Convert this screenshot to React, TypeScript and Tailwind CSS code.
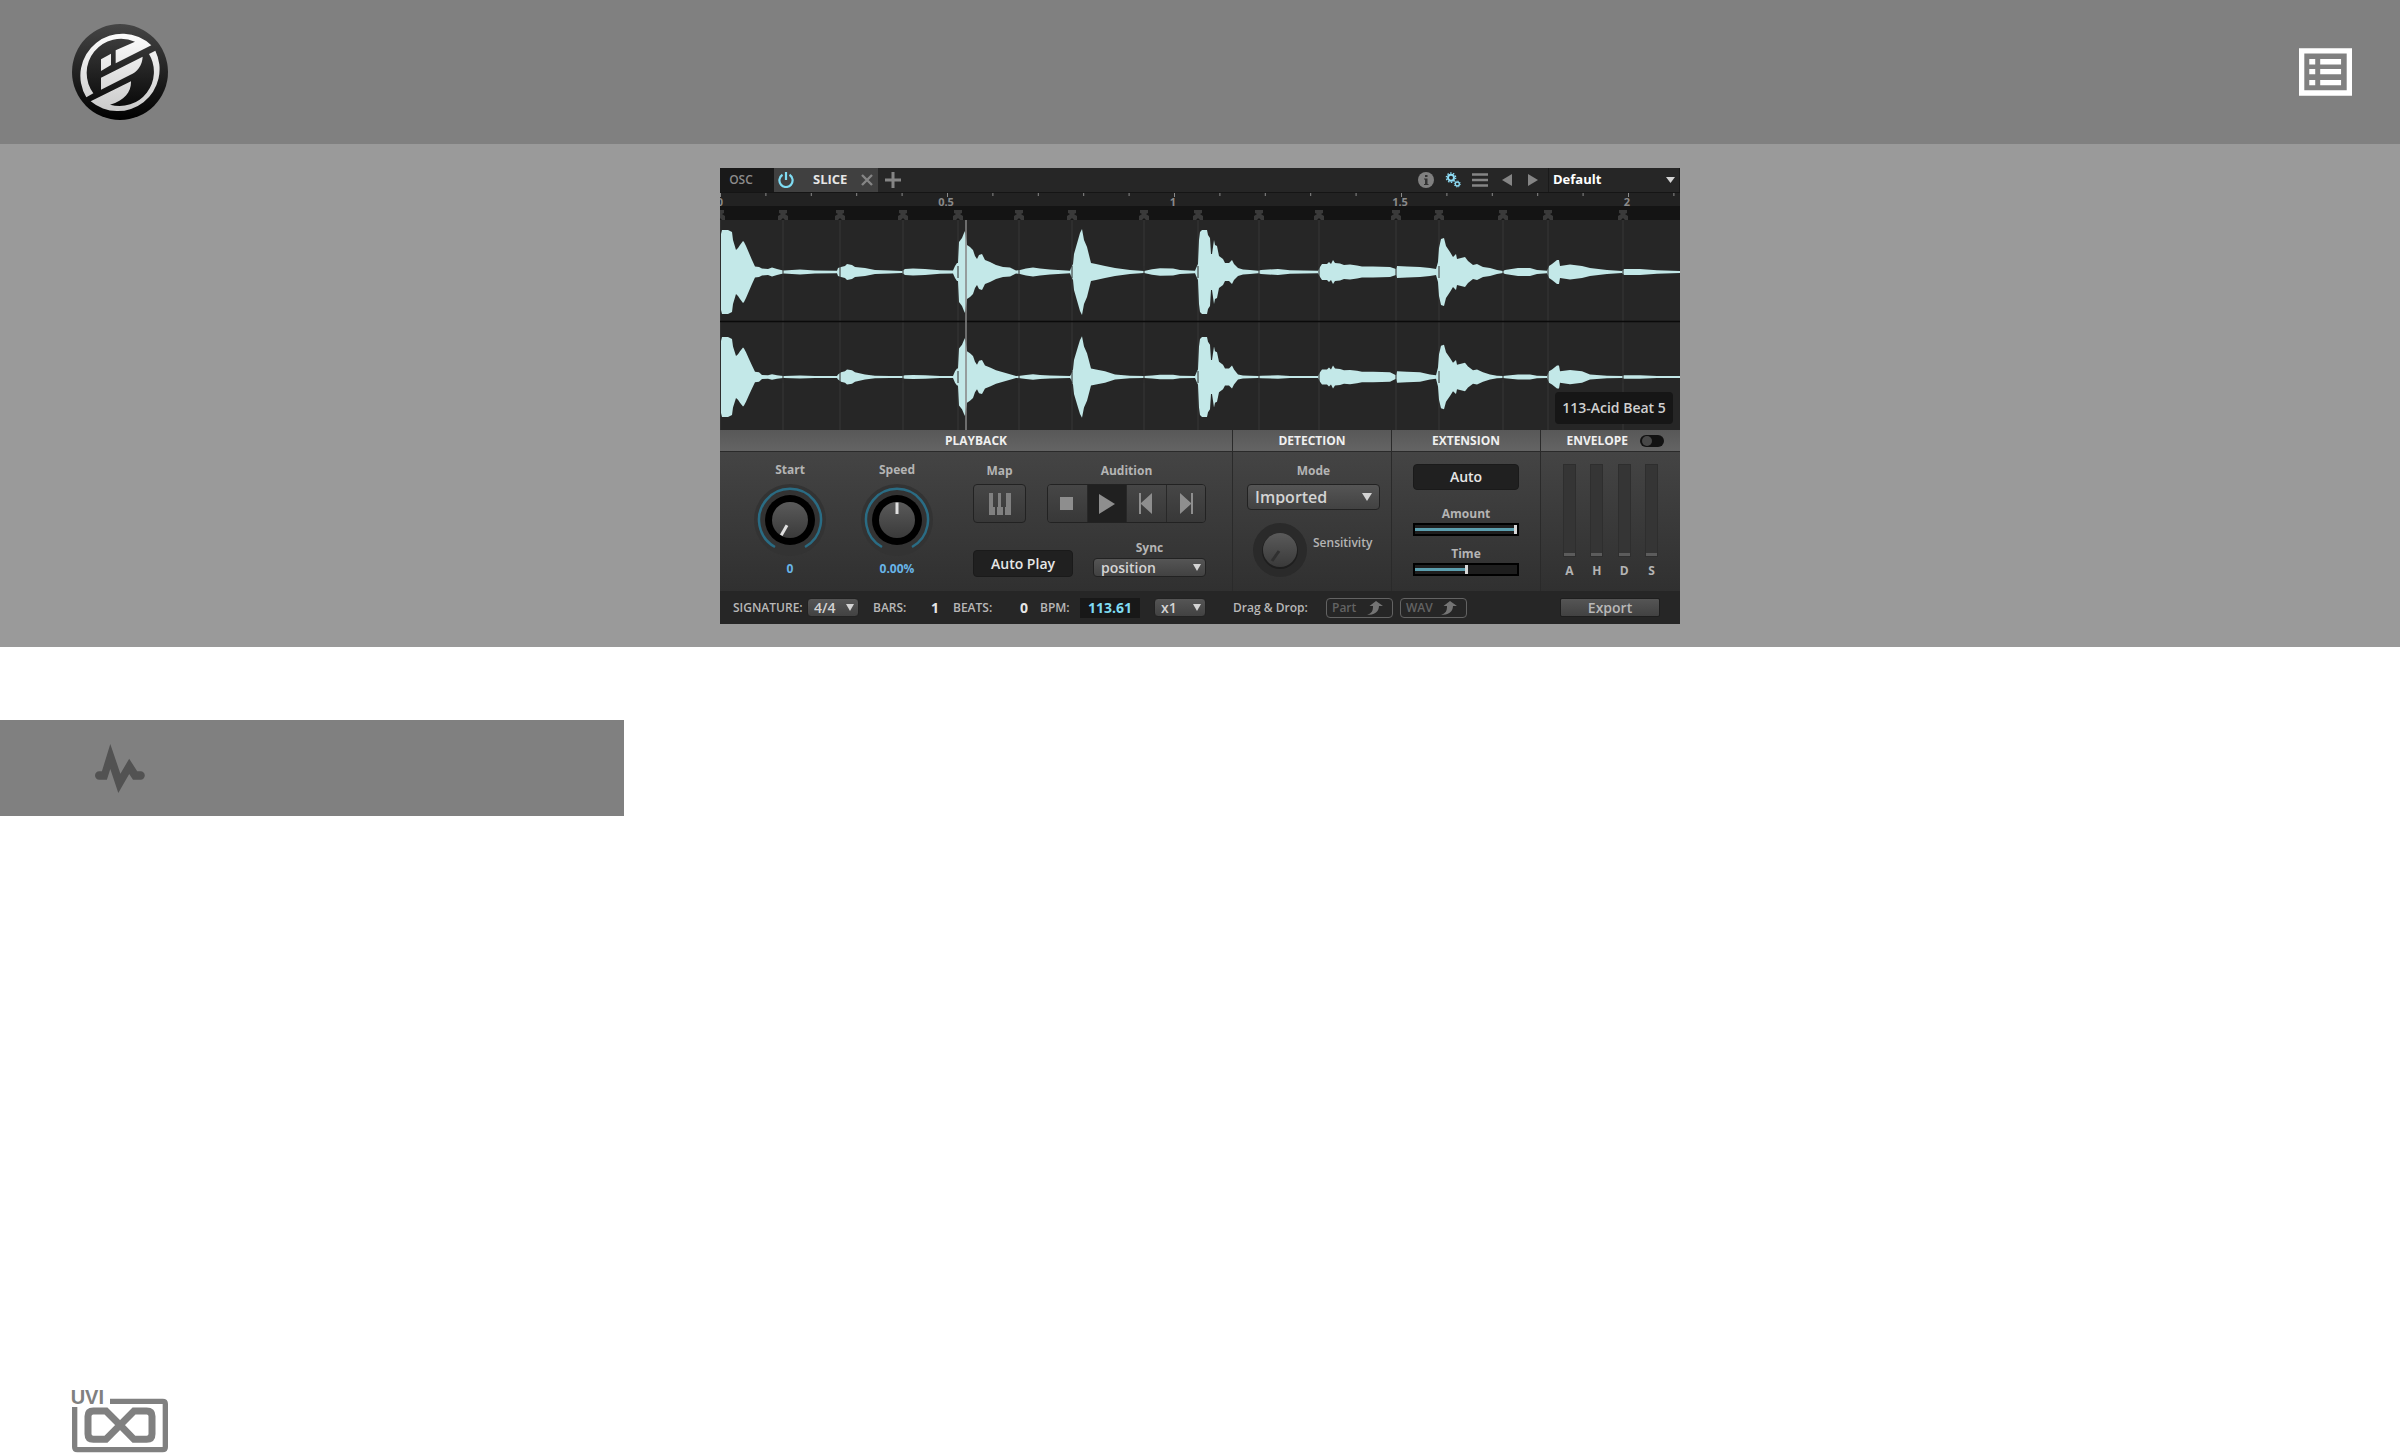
import React from 'react';
import clsx from 'clsx';

const TICK = 45.4;
const SLICES = [0, 63, 120, 183, 238, 299, 352, 424, 478, 539, 599, 676, 719, 783, 828, 903];

// [x, amplitude] pairs along the sample
const ENVELOPE: [number, number][] = [
  [1, 38], [2, 42], [8, 42], [12, 40], [13, 32], [16, 22], [18, 24], [20, 27], [23, 31], [24, 30], [26, 26], [29, 19],
  [32, 12], [35, 5.5], [39, 5], [42, 3.5], [48, 3], [52, 4.4], [57, 3], [61, 2], [64, 1.5], [80, 2.5], [95, 1.5],
  [117, 1.2], [118, 4], [121, 5], [125, 6], [127, 8], [132, 7], [135, 5], [145, 4], [155, 2], [170, 1.5], [182, 1],
  [185, 3], [193, 3.4], [205, 3], [220, 1.8], [233, 1.5], [235, 6], [237, 9], [238, 9], [239, 30], [242, 34],
  [244, 39], [245, 41], [247, 27], [250, 25], [253, 22], [255, 16], [257, 13], [259, 17], [262, 18], [265, 12],
  [270, 10], [276, 7], [283, 5], [290, 4.5], [296, 1.5], [300, 2], [306, 3.5], [313, 4.5], [320, 3.5], [330, 2.5],
  [350, 1.3], [351, 4], [353, 8], [354, 18], [358, 32], [360, 39], [362, 43], [364, 32], [367, 25], [369, 17],
  [371, 9], [376, 8], [385, 6], [395, 4], [410, 2], [424, 1], [432, 2.7], [440, 3.7], [453, 3.6], [460, 2],
  [475, 1.2], [477, 6], [478, 8], [479, 32], [480, 40], [482, 42], [487, 42], [488, 37], [490, 34], [491, 18],
  [492, 18], [494, 32], [495, 27], [497, 26], [499, 16], [503, 13], [505, 9], [509, 9], [512, 12], [514, 8],
  [518, 4], [523, 2.5], [530, 2], [538, 1.2], [541, 2], [558, 3], [570, 1.7], [598, 1.2], [600, 5], [602, 8],
  [607, 8], [609, 10], [611, 8], [613, 12], [615, 9], [620, 8.5], [624, 7], [630, 7.5], [637, 6.5], [642, 5.5],
  [653, 5.5], [670, 5], [676, 3], [677, 6], [687, 5.5], [700, 5], [710, 4], [716, 3], [718, 10], [719, 24],
  [721, 33], [724, 34], [726, 26], [730, 20], [733, 15], [736, 18], [737, 13], [741, 14], [745, 15], [748, 11],
  [753, 7], [757, 8], [763, 5], [770, 4], [777, 2], [783, 1], [785, 2], [798, 4], [810, 4], [817, 2], [827, 1.3],
  [829, 6], [832, 8], [837, 12], [839, 12], [840, 6], [850, 7.5], [862, 6], [870, 4], [887, 2], [902, 1],
  [904, 3], [920, 3], [937, 1.8], [960, 1],
];

const wavePath = (center: number, scale: (a: number) => number) => {
  const top = ENVELOPE.map(([x, a]) => `${x} ${center - scale(a)}`);
  const bottom = [...ENVELOPE].reverse().map(([x, a]) => `${x} ${center + scale(a)}`);
  return `M${top.join('L')}L${bottom.join('L')}Z`;
};

const LEFT_WAVE = wavePath(80, (a) => a);
const RIGHT_WAVE = wavePath(185, (a) => (a < 5 ? Math.max(0.9, a * 0.6) : a * 0.95));

const BrandLogo: React.FC = () => (
  <svg viewBox="66 42 288 288" className="size-24" role="img" aria-label="Home">
    <defs>
      <linearGradient id="disc" x1="0" y1="0" x2="0" y2="1">
        <stop offset="0" stopColor="#454545" />
        <stop offset="1" stopColor="#000" />
      </linearGradient>
      <linearGradient id="mark" gradientUnits="userSpaceOnUse" x1="0" y1="60" x2="0" y2="312">
        <stop offset="0" stopColor="#fff" />
        <stop offset="1" stopColor="#c8c8c8" />
      </linearGradient>
    </defs>
    <circle cx="210" cy="186" r="144" fill="url(#disc)" />
    <g fill="url(#mark)">
      <path d="M109 262A126 126 0 0 1 304 106L197 160V121L255 95A103 103 0 0 0 130 250Z" />
      <path d="M316 122A126 126 0 0 1 122 274L243 214C244 245 225 272 180 284A103 103 0 0 0 297 132Z" />
      <path d="M153 148L183 131V165L153 183Z" />
      <path d="M153 203L278 140C277 165 262 186 240 195L153 239Z" />
    </g>
  </svg>
);

const MenuIcon: React.FC = () => (
  <svg viewBox="86 84 160 144" className="h-12 w-[53px]" fill="#fff">
    <path fillRule="evenodd" d="M86 84H246V228H86ZM102 100V211H230V100Z" />
    {[117, 147, 180].map((y) => (
      <path key={y} d={`M117 ${y}h18v16h-18zM150 ${y}h63v16h-63z`} />
    ))}
  </svg>
);

const PulseIcon: React.FC = () => (
  <svg viewBox="0 0 50 49" className="h-[49px] w-[50px]" fill="#525252">
    <path d="M4.200 27.300H6.900L15.300 0L25.400 29.700L34.200 14.700L42.200 27.300H45.600a4.200 4.200 0 0 1 0 8.400H38L34.200 30L23.300 49L15.300 25L11.900 35.700H4.200a4.200 4.200 0 0 1 0-8.400Z" />
  </svg>
);

const UviLogo: React.FC = () => (
  <svg viewBox="66 60 288 189" className="h-[63px] w-24 overflow-visible" role="img" aria-label="UVI">
    <text x="62" y="103" className="font-['Liberation_Sans',sans-serif] text-[60px] font-bold" fill="#808080">UVI</text>
    <g fill="none" stroke="#808080">
      <path strokeWidth="16" d="M180 94H338Q346 94 346 102V231Q346 239 338 239H82Q74 239 74 231V111" />
      <path
        strokeWidth="21"
        d="M210 165L168 123H130Q114 123 114 139V192Q114 208 130 208H168L252 123H290Q306 123 306 139V192Q306 208 290 208H252Z"
      />
    </g>
  </svg>
);

const GearsIcon: React.FC = () => (
  <svg viewBox="0 0 48 48" className="size-4" fill="none" stroke="#8edcf5">
    <circle cx="18" cy="17" r="9" strokeWidth="6" />
    <circle cx="18" cy="17" r="14" strokeWidth="4" strokeDasharray="4.4 4.4" />
    <circle cx="37" cy="36" r="6" strokeWidth="4" />
    <circle cx="37" cy="36" r="9" strokeWidth="3" strokeDasharray="3.5 3.5" />
  </svg>
);

const Arrow: React.FC<{ className?: string }> = ({ className }) => (
  <svg viewBox="0 0 8 7" preserveAspectRatio="none" className={clsx('pointer-events-none absolute', className)} fill="#d4d4d4">
    <path d="M0 0H8L4 7Z" />
  </svg>
);

const TabBar: React.FC = () => (
  <div className="flex h-6 items-stretch bg-[#262626]">
    <button className="w-[54px] bg-[#191919] pr-3 text-xs font-semibold text-[#8c8c8c]">OSC</button>
    <div className="flex w-[104px] items-center bg-[#404040] pl-1">
      <button aria-label="Power">
        <svg viewBox="0 0 16 16" className="size-4" fill="none" stroke="#7fdcf3" strokeWidth="2.2">
          <path d="M4.500 2.800A6.600 6.600 0 1 0 11.500 2.800M8 0V8" />
        </svg>
      </button>
      <span className="ml-[19px] w-12 text-[13px] font-bold text-[#e6e6e6]">SLICE</span>
      <button aria-label="Close">
        <svg viewBox="0 0 12 12" className="size-3" stroke="#858585" strokeWidth="2.400">
          <path d="M1 1L11 11M11 1L1 11" />
        </svg>
      </button>
    </div>
    <button aria-label="Add" className="ml-[7px]">
      <svg viewBox="0 0 16 16" className="size-4" stroke="#858585" strokeWidth="3">
        <path d="M8 0V16M0 8H16" />
      </svg>
    </button>
    <div className="ml-auto flex items-center">
      <button aria-label="Info" className="mr-[11px]">
        <svg viewBox="0 0 16 16" className="size-4">
          <circle cx="8" cy="8" r="8" fill="#808080" />
          <path d="M7 3h2.500v2H7zM6 6.500h3.500V12H10.500V13H6V12H7V7.500H6z" fill="#333" />
        </svg>
      </button>
      <button aria-label="Settings" className="mr-[11px]"><GearsIcon /></button>
      <button aria-label="Menu" className="mr-[14px]">
        <svg viewBox="0 0 16 14" className="h-3.5 w-4" stroke="#858585" strokeWidth="2.600">
          <path d="M0 1.500H16M0 7H16M0 12.500H16" />
        </svg>
      </button>
      <button aria-label="Previous" className="mr-4">
        <svg viewBox="0 0 10 12" className="h-3 w-2.5" fill="#858585"><path d="M10 0V12L0 6Z" /></svg>
      </button>
      <button aria-label="Next" className="mr-[10px]">
        <svg viewBox="0 0 10 12" className="h-3 w-2.5" fill="#858585"><path d="M0 0V12L10 6Z" /></svg>
      </button>
      <div className="relative flex h-6 w-[132px] items-center border-x border-[#1a1a1a]">
        <select aria-label="Preset" className="size-full appearance-none pl-1 text-[13px] font-bold text-white">
          <option>Default</option>
        </select>
        <Arrow className="right-1 h-[6px] w-[9px]" />
      </div>
    </div>
  </div>
);

const Waveform: React.FC = () => (
  <div className="relative">
    <svg viewBox="0 0 960 238" className="block w-full">
      <rect width="960" height="238" fill="#262626" />
      <rect width="960" height="14" fill="#222" />
      <rect y="14" width="960" height="14" fill="#141414" />
      <path d="M0 0.500H960" stroke="#151515" />
      {Array.from({ length: 22 }, (_, i) => (
        <path key={i} d={`M${i * TICK + 0.5} 1v${i % 5 ? 3 : 4}`} stroke="#8a8a8a" />
      ))}
      {['0', '0.5', '1', '1.5', '2'].map((label, i) => (
        <text key={label} x={i ? i * TICK * 5 - 1 : 0} y="14" textAnchor="middle" fontSize="11" fontWeight="700" fill="#8a8a8a">
          {label}
        </text>
      ))}
      {SLICES.map((x) => (
        <g key={x}>
          <path d={`M${x} 28V238`} stroke="#363636" />
          <path d={`M${x - 4} 18h8v3l-2 1 3 2v4h-3l-2-2-2 2h-3v-4l3-2-2-1z`} fill="#3a3a3a" />
        </g>
      ))}
      <path d="M0 129.500H960" stroke="#0a0a0a" strokeWidth="1.500" />
      <path d={LEFT_WAVE} fill="#c3e8e8" />
      <path d={RIGHT_WAVE} fill="#c3e8e8" />
      {SLICES.slice(1).map((x) => (
        <path key={x} d={`M${x} 74v12M${x} 179v12`} stroke="#2b2b2b" />
      ))}
      <path d="M246 28V238" stroke="#868686" strokeWidth="1.500" />
    </svg>
    <div className="absolute right-[7px] bottom-1.5 flex h-8 w-[118px] items-center justify-center rounded-sm bg-[#161616] text-sm font-semibold text-[#d0d0d0]">
      113-Acid Beat 5
    </div>
  </div>
);

const Section: React.FC<{ title: string; toggle?: boolean; className: string; children: React.ReactNode }> = ({
  title,
  toggle,
  className,
  children,
}) => (
  <section className="flex flex-col border-l border-[#2a2a2a] first:border-l-0">
    <h2
      className={clsx(
        'flex h-[22px] items-center gap-3 border-b border-[#2a2a2a] bg-linear-to-b from-[#585858] to-[#646464] text-xs font-bold text-[#f0f0f0]',
        toggle ? 'justify-end pr-4' : 'justify-center',
      )}
    >
      {title}
      {toggle && (
        <label className="flex">
          <input type="checkbox" role="switch" aria-label="Envelope" className="peer sr-only" />
          <span className="flex h-3 w-6 items-center rounded-full bg-[#121212] px-0.5">
            <span className="size-2.5 rounded-full bg-[#484848]" />
          </span>
        </label>
      )}
    </h2>
    <div className={clsx('flex-1 bg-linear-to-b from-[#444] to-[#303030] text-xs leading-4 font-bold text-[#b4b4b4]', className)}>
      {children}
    </div>
  </section>
);

const Knob: React.FC<{ label: string; value: string; angle: number }> = ({ label, value, angle }) => (
  <label className="flex w-[72px] flex-col items-center">
    {label}
    <input type="range" min="-150" max="150" defaultValue={angle} className="sr-only" />
    <svg viewBox="0 0 72 72" className="mt-1.5 size-[72px]">
      <circle cx="36" cy="36" r="36" fill="#333" />
      <path d="M21 63A31 31 0 1 1 51 63" fill="none" stroke="#2a6c84" strokeWidth="2.500" />
      <circle cx="36" cy="36" r="25" fill="#000" />
      <circle cx="36" cy="36" r="18" fill="url(#cap)" />
      <path d="M36 18.500V30" stroke="#e0e0e0" strokeWidth="3" transform={`rotate(${angle} 36 36)`} />
    </svg>
    <output className="mt-[5px] text-[#68b5e8]">{value}</output>
  </label>
);

const Dropdown: React.FC<{ label: string; value: string; large?: boolean; className: string }> = ({ label, value, large, className }) => (
  <span className="relative flex items-center">
    <select
      aria-label={label}
      className={clsx(
        'w-full appearance-none rounded-sm border border-[#222] bg-linear-to-b from-[#555] to-[#424242] leading-4 font-semibold text-[#d4d4d4]',
        large ? 'h-[26px] text-base' : 'h-[19px]',
        className,
      )}
    >
      <option>{value}</option>
    </select>
    <Arrow className={large ? 'right-2 h-2 w-2.5' : 'right-[5px] h-[7px] w-2'} />
  </span>
);

const BarSlider: React.FC<{ label: string; value: number }> = ({ label, value }) => (
  <label className="flex flex-col items-center gap-px">
    {label}
    <span className="flex h-[13px] w-full border-2 border-black bg-[#1e1e1e]">
      <input
        type="range"
        defaultValue={value}
        className="h-full w-full appearance-none bg-size-[100%_3px] bg-center bg-no-repeat [&::-webkit-slider-thumb]:h-[9px] [&::-webkit-slider-thumb]:w-[3px] [&::-webkit-slider-thumb]:appearance-none [&::-webkit-slider-thumb]:bg-[#d8d8d8]"
        style={{ backgroundImage: `linear-gradient(90deg, #5b9eae ${value}%, transparent ${value}%)` }}
      />
    </span>
  </label>
);

const EnvelopeSlider: React.FC<{ label: string }> = ({ label }) => (
  <label className="flex w-[13px] flex-col items-center gap-1.5">
    <input
      type="range"
      defaultValue={0}
      className="h-[93px] w-[13px] appearance-none border border-[#2e2e2e] bg-[#353535] [direction:rtl] [writing-mode:vertical-lr] [&::-webkit-slider-thumb]:h-[3px] [&::-webkit-slider-thumb]:w-[11px] [&::-webkit-slider-thumb]:appearance-none [&::-webkit-slider-thumb]:bg-[#5c5c5c]"
    />
    {label}
  </label>
);

const TRANSPORT = [
  { name: 'Stop', d: 'M5 6H18V19H5Z' },
  { name: 'Play', d: 'M4 3V23L20 13Z' },
  { name: 'Previous', d: 'M5 2H7V12L18 2V23L7 13V23H5Z' },
  { name: 'Next', d: 'M17 2H19V23H17V13L6 23V2L17 12Z' },
];

const Transport: React.FC = () => (
  <div className="flex h-[39px] w-[159px] overflow-hidden rounded border border-[#222]">
    {TRANSPORT.map(({ name, d }) => (
      <button
        key={name}
        aria-label={name}
        className={clsx(
          'flex flex-1 items-center justify-center border-l border-[#282828] first:border-l-0',
          name === 'Play' ? 'bg-[#202020]' : 'bg-linear-to-b from-[#464646] to-[#383838]',
        )}
      >
        <svg viewBox="0 0 24 25" className="h-[25px] w-6" fill="#8e8e8e"><path d={d} /></svg>
      </button>
    ))}
  </div>
);

const Playback: React.FC = () => (
  <Section title="PLAYBACK" className="flex pr-[26px] pb-3.5 pl-[34px]">
    <div className="flex gap-[35px] pt-2.5">
      <Knob label="Start" value="0" angle={-150} />
      <Knob label="Speed" value="0.00%" angle={0} />
    </div>
    <div className="ml-auto flex w-[233px] flex-col justify-between pt-[11px]">
      <div className="flex justify-between">
        <div className="flex flex-col items-center gap-[5px]">
          Map
          <button aria-label="Map" className="flex h-[39px] w-[53px] items-center justify-center rounded border border-[#222] bg-linear-to-b from-[#464646] to-[#383838]">
            <svg viewBox="0 0 22 22" className="size-[22px]" fill="#808080">
              <path d="M0 0H4V14H6V22H0ZM9 0H12V14H14V22H8V14H9ZM17 0H22V22H16V14H17Z" />
            </svg>
          </button>
        </div>
        <div className="flex flex-col items-center gap-[5px]">
          Audition
          <Transport />
        </div>
      </div>
      <div className="flex items-end justify-between">
        <button className="h-[27px] w-[100px] rounded border border-[#1a1a1a] bg-[#202020] text-sm font-semibold text-[#e6e6e6]">Auto Play</button>
        <div className="flex w-[113px] flex-col gap-0.5 text-center">
          Sync
          <Dropdown label="Sync" value="position" className="pl-[7px] text-sm" />
        </div>
      </div>
    </div>
  </Section>
);

const Detection: React.FC = () => (
  <Section title="DETECTION" className="pt-[11px] pr-[11px] pb-3.5 pl-3.5">
    <div className="flex flex-col gap-[5px] text-center">
      Mode
      <Dropdown large label="Mode" value="Imported" className="pl-[7px]" />
    </div>
    <label className="mt-[13px] ml-1.5 flex gap-1.5">
      <svg viewBox="0 0 54 54" className="size-[54px] shrink-0">
        <circle cx="27" cy="27" r="27" fill="#2a2a2a" />
        <circle cx="27" cy="28" r="18" fill="#1e1e1e" />
        <circle cx="27" cy="27" r="17" fill="url(#cap)" />
        <path d="M26 28L19 38" stroke="#303030" strokeWidth="3" />
      </svg>
      <input type="range" defaultValue={0} disabled className="sr-only" />
      <span className="mt-3 font-semibold">Sensitivity</span>
    </label>
  </Section>
);

const Extension: React.FC = () => (
  <Section title="EXTENSION" className="px-[21px] pt-3 pb-3.5">
    <button className="mb-4 block h-[26px] w-full rounded border border-[#1a1a1a] bg-[#202020] text-sm font-semibold text-[#e6e6e6]">Auto</button>
    <div className="flex flex-col gap-2.5">
      <BarSlider label="Amount" value={100} />
      <BarSlider label="Time" value={50} />
    </div>
  </Section>
);

const Field: React.FC<{ label: string; value: string; className: string; labelClass: string }> = ({
  label,
  value,
  className,
  labelClass,
}) => (
  <label className="flex items-center">
    <span className={labelClass}>{label}</span>
    <input type="text" defaultValue={value} className={clsx('text-sm font-bold', className)} />
  </label>
);

const DragTarget: React.FC<{ children: React.ReactNode }> = ({ children }) => (
  <button className="flex h-5 w-[67px] items-center justify-between rounded border border-[#636363] px-[5px] text-[#636363]">
    {children}
    <svg viewBox="0 0 16 14" className="mr-1 h-3.5 w-4" fill="#747474">
      <path d="M0 14C5 12 6 10 6 5H2.500L9 0L16 5H12C12 11 7 14 0 14Z" />
    </svg>
  </button>
);

const StatusBar: React.FC = () => (
  <div className="flex h-[33px] items-center bg-[#262626] pr-5 pl-[13px] text-xs font-semibold text-[#b8b8b8]">
    <span className="w-[74px]">SIGNATURE:</span>
    <div className="mr-3.5 w-[52px]"><Dropdown label="Signature" value="4/4" className="pl-1.5 text-sm" /></div>
    <Field label="BARS:" value="1" labelClass="w-10" className="mr-3.5 w-[26px] text-right text-[#e6e6e6]" />
    <Field label="BEATS:" value="0" labelClass="w-[46px]" className="mr-3 w-[29px] text-right text-[#e6e6e6]" />
    <Field label="BPM:" value="113.61" labelClass="w-10" className="mr-3.5 h-5 w-[60px] bg-[#181818] text-center text-[#7fdcf3]" />
    <div className="w-[52px]"><Dropdown label="Multiplier" value="x1" className="pl-1.5 text-sm" /></div>
    <span className="ml-[27px] w-[93px]">Drag &amp; Drop:</span>
    <div className="flex gap-[7px]">
      <DragTarget>Part</DragTarget>
      <DragTarget>WAV</DragTarget>
    </div>
    <button className="ml-auto h-[19px] w-[100px] rounded-xs border border-[#1e1e1e] bg-linear-to-b from-[#555] to-[#424242] text-sm leading-4">Export</button>
  </div>
);

const SlicePanel: React.FC = () => (
  <div className="w-[960px] max-w-full overflow-hidden bg-[#262626] font-['Open_Sans','Noto_Sans',sans-serif]">
    <svg className="absolute size-0">
      <linearGradient id="cap" x1="0" y1="0" x2="0" y2="1">
        <stop offset="0" stopColor="#5a5a5a" />
        <stop offset="1" stopColor="#3a3a3a" />
      </linearGradient>
    </svg>
    <TabBar />
    <Waveform />
    <div className="grid grid-cols-[512fr_159fr_149fr_140fr]">
      <Playback />
      <Detection />
      <Extension />
      <Section title="ENVELOPE" toggle className="flex justify-between px-[22px] pt-3 pb-3">
        {['A', 'H', 'D', 'S'].map((label) => (
          <EnvelopeSlider key={label} label={label} />
        ))}
      </Section>
    </div>
    <StatusBar />
  </div>
);

const App: React.FC = () => {
  return (
    <div className="flex min-h-screen flex-col bg-white">
      <header className="flex h-36 items-center justify-between bg-[#808080] pr-12 pl-[72px]">
        <a href="#"><BrandLogo /></a>
        <button aria-label="Contents"><MenuIcon /></button>
      </header>

      <div className="flex justify-center bg-[#9a9a9a] pt-6 pb-[23px]">
        <SlicePanel />
      </div>

      <main className="mt-[73px]">
        <div className="flex h-24 w-[26%] items-center bg-[#808080] pl-[95px]">
          <PulseIcon />
        </div>
      </main>

      <footer className="mt-auto pl-[72px]">
        <UviLogo />
      </footer>
    </div>
  );
};

export default App;
